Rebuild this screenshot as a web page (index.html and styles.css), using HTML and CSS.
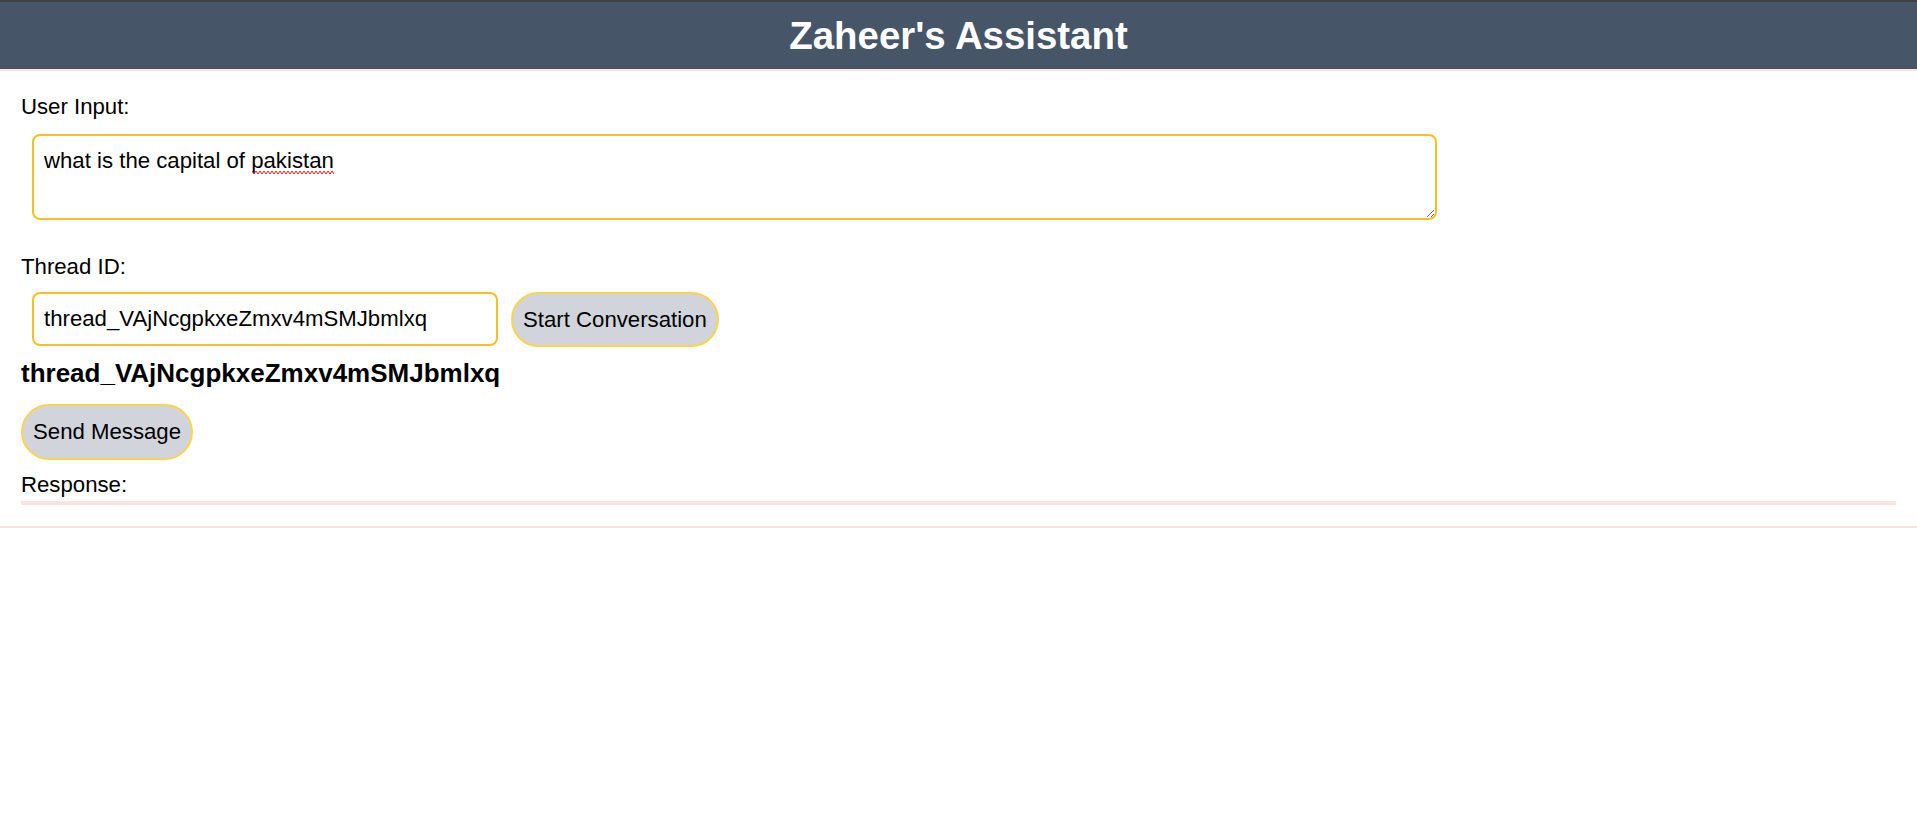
FILE: index.html
```html
<!DOCTYPE html>
<html lang="en">
<head>
<meta charset="utf-8">
<title>Zaheer's Assistant</title>
<link rel="stylesheet" href="styles.css">
</head>
<body>
<header class="header">
  <h1 class="title">Zaheer's Assistant</h1>
</header>
<main class="main">
  <label class="field-label" for="prompt">User Input:</label>
  <div class="prompt-wrap">
    <textarea id="prompt" class="prompt" spellcheck="false">what is the capital of pakistan</textarea>
    <svg class="squiggle" width="84" height="5" viewBox="0 0 84 5" aria-hidden="true">
      <polyline fill="none" stroke="#e11d1d" stroke-width="1" points="0,1 2,4 4,1 6,4 8,1 10,4 12,1 14,4 16,1 18,4 20,1 22,4 24,1 26,4 28,1 30,4 32,1 34,4 36,1 38,4 40,1 42,4 44,1 46,4 48,1 50,4 52,1 54,4 56,1 58,4 60,1 62,4 64,1 66,4 68,1 70,4 72,1 74,4 76,1 78,4 80,1 82,4"/>
    </svg>
  </div>
  <label class="field-label thread-label" for="thread">Thread ID:</label>
  <div class="thread-row">
    <input id="thread" class="thread-input" type="text" value="thread_VAjNcgpkxeZmxv4mSMJbmlxq" spellcheck="false">
    <button class="pill-btn" type="button">Start Conversation</button>
  </div>
  <h3 class="thread-heading">thread_VAjNcgpkxeZmxv4mSMJbmlxq</h3>
  <button class="pill-btn send-btn" type="button">Send Message</button>
  <div class="response-label">Response:</div>
</main>
</body>
</html>
```
FILE: styles.css
```css
* {
  box-sizing: border-box;
}

html, body {
  margin: 0;
  padding: 0;
  background: #ffffff;
}

body {
  font-family: "Liberation Sans", Arial, Helvetica, sans-serif;
  color: #000000;
  font-size: 22.2px;
}

.header {
  height: 71px;
  border-top: 2px solid #3f3f46;
  border-bottom: 2px solid #fee2e2;
  background: #475569;
  display: flex;
  align-items: center;
  justify-content: center;
}

.title {
  margin: 0;
  color: #ffffff;
  font-size: 38.4px;
  font-weight: bold;
  line-height: 44px;
}

.main {
  display: flex;
  flex-direction: column;
  align-items: flex-start;
  padding: 23px 21px 21px 21px;
  border-bottom: 2px solid #fee2e2;
}

.field-label {
  display: block;
  font-size: 22.2px;
  line-height: 26px;
}

.prompt-wrap {
  position: relative;
  margin: 14px 0 0 11px;
}

.prompt {
  display: block;
  width: 1405px;
  height: 86px;
  margin: 0;
  padding: 12px 10px;
  border: 2px solid #fbbf24;
  border-radius: 8px;
  font-family: "Liberation Sans", Arial, Helvetica, sans-serif;
  font-size: 22.2px;
  line-height: 25.5px;
  color: #000000;
  background: #ffffff;
  outline: none;
}

.squiggle {
  position: absolute;
  left: 220px;
  top: 36px;
  pointer-events: none;
}

.thread-label {
  margin-top: 34px;
}

.thread-row {
  display: flex;
  align-items: flex-start;
  gap: 13px;
  margin: 12px 0 0 11px;
}

.thread-input {
  width: 466px;
  height: 54px;
  margin: 0;
  padding: 12px 10px;
  border: 2px solid #fbbf24;
  border-radius: 8px;
  font-family: "Liberation Sans", Arial, Helvetica, sans-serif;
  font-size: 22.2px;
  color: #000000;
  background: #ffffff;
  outline: none;
}

.pill-btn {
  height: 55px;
  margin: 0;
  padding: 0 10px;
  border: 2px solid #fcd34d;
  border-radius: 9999px;
  background: #d1d5db;
  color: #000000;
  font-family: "Liberation Sans", Arial, Helvetica, sans-serif;
  font-size: 22.2px;
  line-height: 25.5px;
  white-space: nowrap;
}

.thread-heading {
  margin: 11px 0 0 0;
  font-size: 26px;
  line-height: 30px;
  font-weight: bold;
}

.send-btn {
  height: 56px;
  margin-top: 16px;
}

.response-label {
  align-self: stretch;
  margin-top: 12px;
  padding-bottom: 3px;
  font-size: 22.2px;
  line-height: 26px;
  border-bottom: 4px solid #fee2e2;
}
```
